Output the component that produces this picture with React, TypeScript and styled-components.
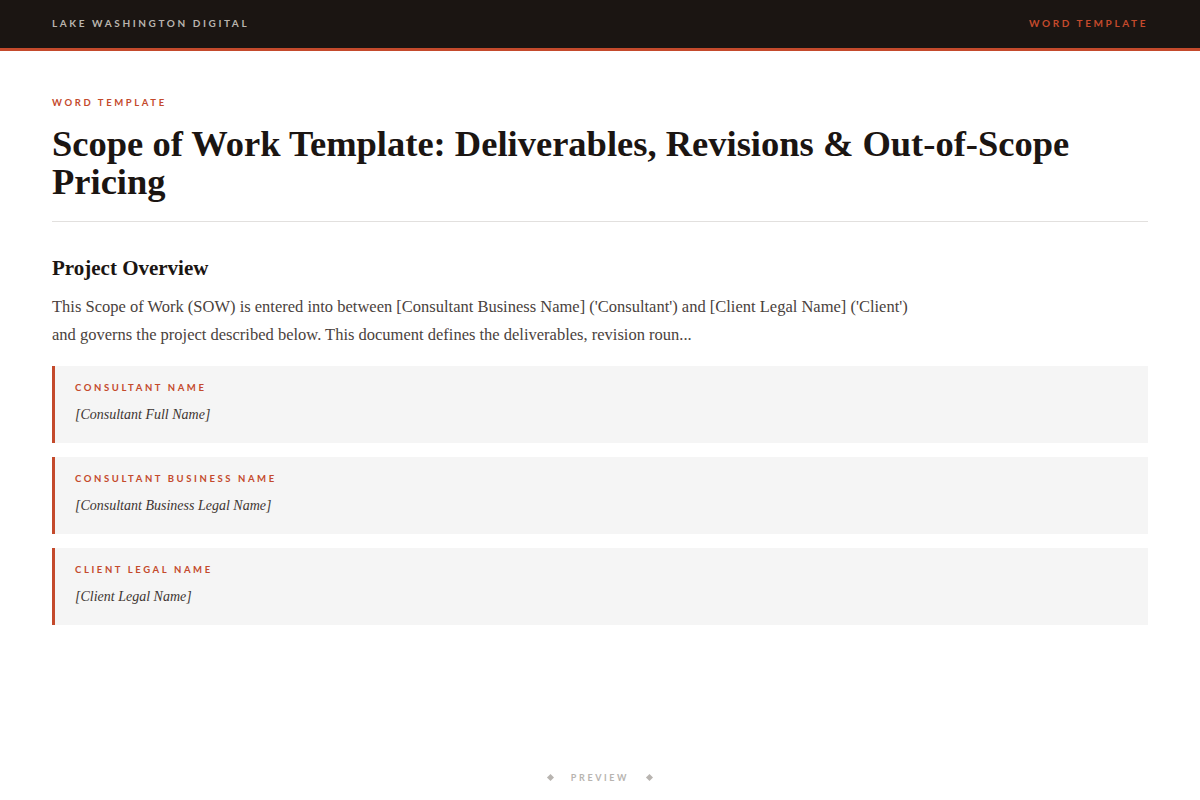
import React from "react";
import styled, { createGlobalStyle } from "styled-components";

const ACCENT = "#c44a2c";
const INK = "#1b1512";

const GlobalStyle = createGlobalStyle`
  html, body {
    margin: 0;
    padding: 0;
    background: #ffffff;
  }
  * {
    box-sizing: border-box;
  }
`;

const Page = styled.div`
  min-height: 100vh;
  display: flex;
  flex-direction: column;
`;

const TopBar = styled.header`
  height: 51px;
  background: ${INK};
  border-bottom: 3px solid ${ACCENT};
  display: flex;
  align-items: center;
  justify-content: space-between;
  padding: 0 52px 2px;
`;

const Caps = styled.span<{ $color: string; $size?: number }>`
  font-family: "Lato", "Liberation Sans", sans-serif;
  font-size: ${(p) => p.$size ?? 10}px;
  font-weight: 700;
  letter-spacing: 2.6px;
  text-transform: uppercase;
  color: ${(p) => p.$color};
`;

const Main = styled.main`
  padding: 0 52px;
`;

const Eyebrow = styled.div`
  margin-top: 44px;
  line-height: 12px;
`;

const Title = styled.h1`
  margin: 16px 0 0;
  font-family: "Liberation Serif", "Times New Roman", serif;
  font-weight: 700;
  font-size: 36.5px;
  line-height: 38px;
  color: ${INK};
  padding-bottom: 20px;
  border-bottom: 1px solid #e2e0de;
`;

const SectionTitle = styled.h2`
  margin: 32px 0 0;
  font-family: "Liberation Serif", "Times New Roman", serif;
  font-weight: 700;
  font-size: 21px;
  line-height: 28px;
  color: ${INK};
`;

const Body = styled.p`
  margin: 11px 0 0;
  max-width: 870px;
  font-family: "Liberation Serif", "Times New Roman", serif;
  font-size: 16.5px;
  line-height: 28px;
  color: #4a423d;
`;

const FieldList = styled.div`
  margin-top: 17px;
  display: flex;
  flex-direction: column;
  gap: 14px;
`;

const Field = styled.div`
  background: #f5f5f5;
  border-left: 3px solid ${ACCENT};
  padding: 16px 20px 16px;
  display: flex;
  flex-direction: column;
  gap: 10px;
`;

const FieldValue = styled.div`
  font-family: "Liberation Serif", "Times New Roman", serif;
  font-style: italic;
  font-size: 14px;
  line-height: 24px;
  color: #3e3632;
`;

const Footer = styled.footer`
  margin-top: auto;
  padding: 0 0 17px;
  display: flex;
  align-items: center;
  justify-content: center;
  gap: 18px;
`;

const Diamond = styled.span`
  width: 5px;
  height: 5px;
  background: #b8b4b0;
  transform: rotate(45deg);
`;

const fields = [
  { label: "Consultant Name", value: "[Consultant Full Name]" },
  { label: "Consultant Business Name", value: "[Consultant Business Legal Name]" },
  { label: "Client Legal Name", value: "[Client Legal Name]" },
];

export default function App() {
  return (
    <Page>
      <GlobalStyle />
      <TopBar>
        <Caps $color="#b9b4ae">Lake Washington Digital</Caps>
        <Caps $color={ACCENT}>Word Template</Caps>
      </TopBar>
      <Main>
        <Eyebrow>
          <Caps $color={ACCENT} $size={9.5}>
            Word Template
          </Caps>
        </Eyebrow>
        <Title>Scope of Work Template: Deliverables, Revisions &amp; Out-of-Scope Pricing</Title>
        <SectionTitle>Project Overview</SectionTitle>
        <Body>
          This Scope of Work (SOW) is entered into between [Consultant Business Name] ('Consultant') and
          [Client Legal Name] ('Client') and governs the project described below. This document defines
          the deliverables, revision roun...
        </Body>
        <FieldList>
          {fields.map((f) => (
            <Field key={f.label}>
              <Caps $color={ACCENT} $size={9.5}>
                {f.label}
              </Caps>
              <FieldValue>{f.value}</FieldValue>
            </Field>
          ))}
        </FieldList>
      </Main>
      <Footer>
        <Diamond />
        <Caps $color="#b8b4b0" $size={9}>
          Preview
        </Caps>
        <Diamond />
      </Footer>
    </Page>
  );
}
